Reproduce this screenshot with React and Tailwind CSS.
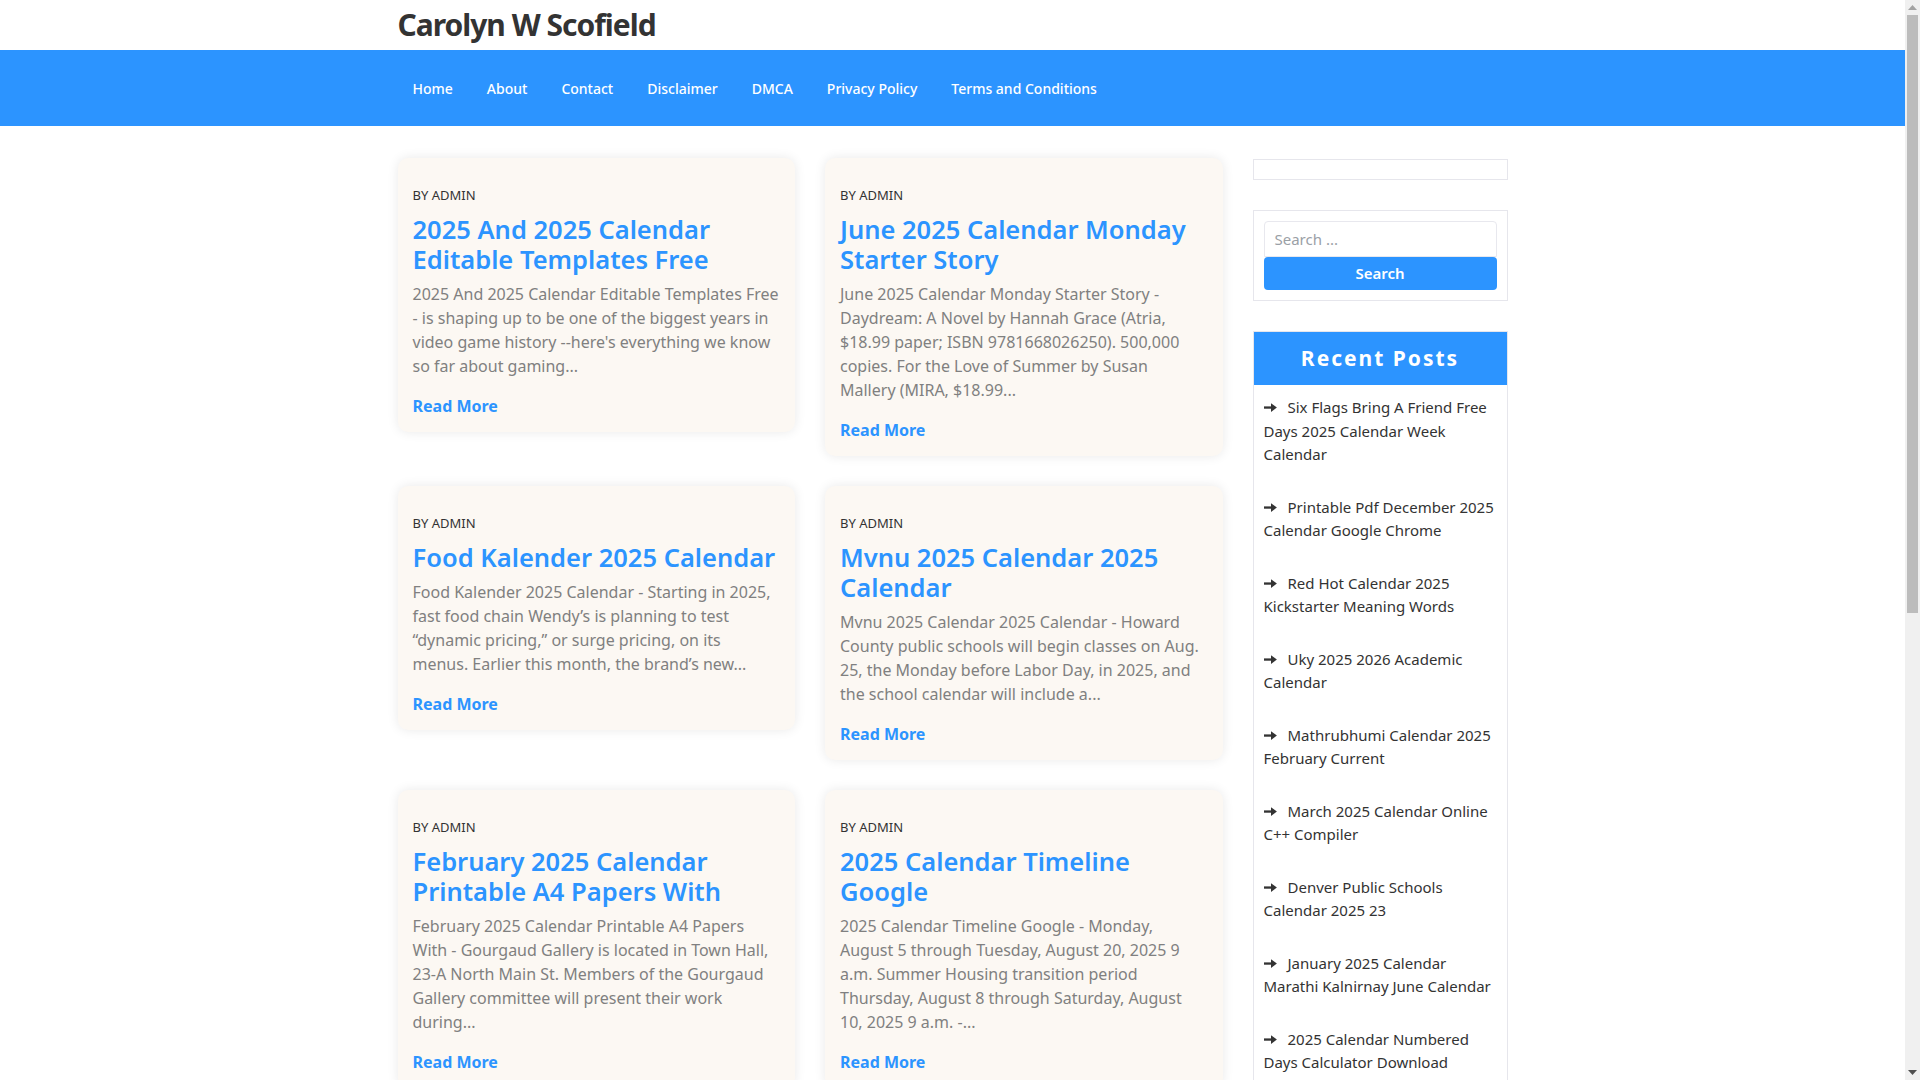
import React from "react";

const navLinks = ["Home", "About", "Contact", "Disclaimer", "DMCA", "Privacy Policy", "Terms and Conditions"];

const posts = [
  {
    title: "2025 And 2025 Calendar Editable Templates Free",
    excerpt:
      "2025 And 2025 Calendar Editable Templates Free - is shaping up to be one of the biggest years in video game history --here's everything we know so far about gaming...",
  },
  {
    title: "June 2025 Calendar Monday Starter Story",
    excerpt:
      "June 2025 Calendar Monday Starter Story - Daydream: A Novel by Hannah Grace (Atria, $18.99 paper; ISBN 9781668026250). 500,000 copies. For the Love of Summer by Susan Mallery (MIRA, $18.99...",
  },
  {
    title: "Food Kalender 2025 Calendar",
    excerpt:
      "Food Kalender 2025 Calendar - Starting in 2025, fast food chain Wendy’s is planning to test “dynamic pricing,” or surge pricing, on its menus. Earlier this month, the brand’s new...",
  },
  {
    title: "Mvnu 2025 Calendar 2025 Calendar",
    excerpt:
      "Mvnu 2025 Calendar 2025 Calendar - Howard County public schools will begin classes on Aug. 25, the Monday before Labor Day, in 2025, and the school calendar will include a...",
  },
  {
    title: "February 2025 Calendar Printable A4 Papers With",
    excerpt:
      "February 2025 Calendar Printable A4 Papers With - Gourgaud Gallery is located in Town Hall, 23-A North Main St. Members of the Gourgaud Gallery committee will present their work during...",
  },
  {
    title: "2025 Calendar Timeline Google",
    excerpt:
      "2025 Calendar Timeline Google - Monday, August 5 through Tuesday, August 20, 2025 9 a.m. Summer Housing transition period Thursday, August 8 through Saturday, August 10, 2025 9 a.m. -...",
  },
];

const recent = [
  "Six Flags Bring A Friend Free Days 2025 Calendar Week Calendar",
  "Printable Pdf December 2025 Calendar Google Chrome",
  "Red Hot Calendar 2025 Kickstarter Meaning Words",
  "Uky 2025 2026 Academic Calendar",
  "Mathrubhumi Calendar 2025 February Current",
  "March 2025 Calendar Online C++ Compiler",
  "Denver Public Schools Calendar 2025 23",
  "January 2025 Calendar Marathi Kalnirnay June Calendar",
  "2025 Calendar Numbered Days Calculator Download",
];

// thick long arrow, like the font icon in the widget list
const Arrow = () => (
  <svg width="13" height="9" viewBox="0 0 13 9" className="inline-block mr-[11px] align-[1px]">
    <rect x="0" y="3.4" width="8" height="2.3" fill="#333" />
    <path d="M7 0.2 L12.9 4.55 L7 8.9 Z" fill="#333" />
  </svg>
);

// the browser's vertical scrollbar seen on the right of the shot
const Scrollbar = () => (
  <div className="w-[15px] shrink-0 bg-[#f0f0f0] flex flex-col items-center">
    <div className="h-[15px] flex items-center justify-center">
      <svg width="9" height="5" viewBox="0 0 9 5">
        <path d="M0 5 L4.5 0 L9 5 Z" fill="#a3a3a3" />
      </svg>
    </div>
    <div className="w-[11px] h-[598px] bg-[#bcbcbc]"></div>
    <div className="flex-1"></div>
    <div className="h-[15px] flex items-center justify-center">
      <svg width="9" height="5" viewBox="0 0 9 5">
        <path d="M0 0 L9 0 L4.5 5 Z" fill="#505050" />
      </svg>
    </div>
  </div>
);

export default function App() {
  return (
    <div className="h-screen flex overflow-hidden bg-white text-[#333]" style={{ fontFamily: '"Noto Sans", "Open Sans", sans-serif' }}>
      <div className="flex-1 min-w-0 overflow-hidden">
        {/* site title */}
        <header className="max-w-[1140px] mx-auto px-[15px] h-[50px] flex items-center">
          <h1 className="text-[30px] font-bold text-[#333] leading-none tracking-[-1px]">Carolyn W Scofield</h1>
        </header>

        {/* menu */}
        <nav className="bg-[#2c94ff] h-[76px]">
          <div className="max-w-[1140px] mx-auto px-[15px] h-full flex items-center">
            <ul className="pl-[15px] flex items-center gap-[34px]">
              {navLinks.map((l) => (
                <li key={l} className="text-[14px] font-medium text-white">
                  {l}
                </li>
              ))}
            </ul>
          </div>
        </nav>

        <div className="max-w-[1140px] mx-auto px-[15px] mt-8 flex gap-[30px] items-start">
          {/* posts */}
          <main className="w-[825px] grid grid-cols-2 gap-[30px] items-start">
            {posts.map((p) => (
              <article
                key={p.title}
                className="bg-[#fcf8f3] rounded-[10px] shadow-[0_0_12px_rgba(0,0,0,0.09)] px-[15px] pt-[27px] pb-[14px]"
              >
                <p className="text-[13px] leading-[20px] uppercase text-[#333]">By Admin</p>
                <h2 className="mt-[9px] text-[25.5px] leading-[30px] font-semibold text-[#2c94ff]">{p.title}</h2>
                <p className="mt-[8px] text-[16px] leading-[24px] text-[#808080]">{p.excerpt}</p>
                <a className="block mt-[16px] text-[16px] leading-[24px] font-bold text-[#2c94ff]">Read More</a>
              </article>
            ))}
          </main>

          {/* sidebar */}
          <aside className="w-[255px] mt-px">
            <div className="border border-[#e6e6ec] h-[21px]"></div>

            <div className="mt-[30px] border border-[#e6e6ec] p-[10px]">
              <div className="h-[36px] border border-[#e8e8ee] rounded-t-[4px] bg-white px-[10px] flex items-center text-[15px] text-[#9aa0a6]">
                Search ...
              </div>
              <button className="w-full h-[33px] bg-[#2c94ff] rounded-[4px] text-white text-[15px] font-semibold">
                Search
              </button>
            </div>

            <div className="mt-[30px] border border-[#e6e6ec]">
              <div className="h-[53px] bg-[#2c94ff] flex items-center justify-center text-white text-[21px] font-bold tracking-[2px]">
                Recent Posts
              </div>
              <ul className="px-[10px] pt-[11px] pb-[20px] flex flex-col gap-[29px]">
                {recent.map((r) => (
                  <li key={r} className="text-[15px] leading-[23.5px] text-[#333]">
                    <Arrow />
                    {r}
                  </li>
                ))}
              </ul>
            </div>
          </aside>
        </div>
      </div>
      <Scrollbar />
    </div>
  );
}
